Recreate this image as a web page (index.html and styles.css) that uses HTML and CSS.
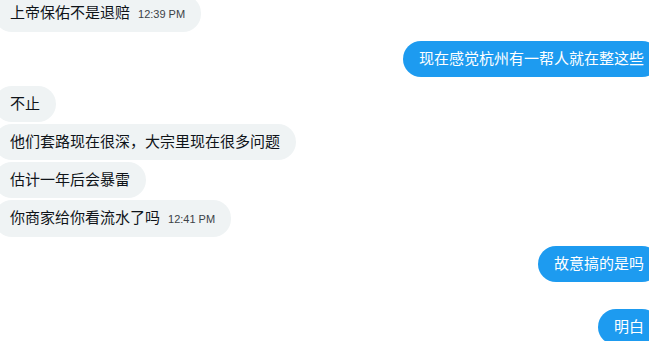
FILE: index.html
```html
<!DOCTYPE html>
<html lang="zh-CN">
<head>
  <meta charset="UTF-8">
  <title>私信</title>
  <link rel="stylesheet" href="styles.css">
</head>
<body>

  <div class="chat">
    <div class="row in">
      <div class="bubble">上帝保佑不是退赔<span class="time">12:39 PM</span></div>
    </div>

    <div class="row out group">
      <div class="bubble">现在感觉杭州有一帮人就在整这些</div>
    </div>

    <!-- 对方连续几条 -->
    <div class="row in group">
      <div class="bubble">不止</div>
    </div>
    <div class="row in">
      <div class="bubble">他们套路现在很深，大宗里现在很多问题</div>
    </div>
    <div class="row in">
      <div class="bubble">估计一年后会暴雷</div>
    </div>
    <div class="row in">
      <div class="bubble">你商家给你看流水了吗<span class="time">12:41 PM</span></div>
    </div>

    <div class="row out group">
      <div class="bubble">故意搞的是吗</div>
    </div>
    <div class="row out last">
      <div class="bubble">明白</div>
    </div>
  </div>

</body>
</html>
```

FILE: styles.css
```css
body {
  margin: 0;
  background-color: #fff;
  font-family: "Liberation Sans", "Noto Sans CJK SC", sans-serif;
  overflow: hidden;
}
.chat {
  width: 666px;
  margin: -5px 0 0 -6px;
  display: flex;
  flex-direction: column;
  gap: 2px;
}
.row {
  display: flex;
}
.row.out {
  justify-content: flex-end;
}
.row.group {
  margin-top: 7px;
}
.row.last {
  margin-top: 25px;
}
.bubble {
  padding: 8px 16px;
  font-size: 15px;
  line-height: 20px;
  border-radius: 18px;
  white-space: nowrap;
}
.in .bubble {
  background-color: #eff3f4;
  color: #0f1419;
}
.out .bubble {
  background-color: #1d9bf0;
  color: white;
}
.time {
  margin-left: 8px;
  font-size: 11px;
  color: #3c4247;
}
```
